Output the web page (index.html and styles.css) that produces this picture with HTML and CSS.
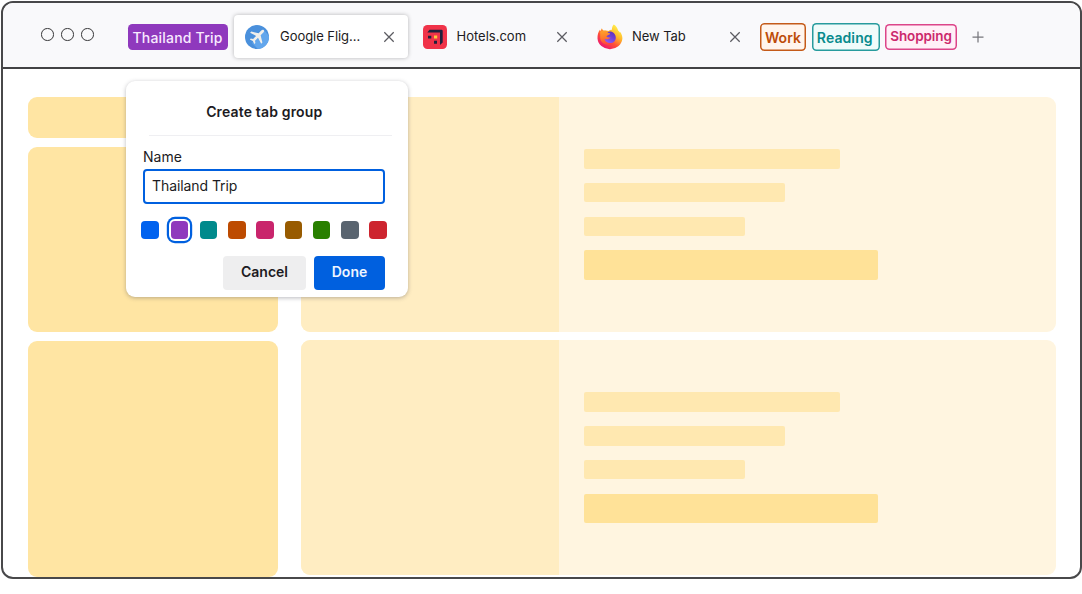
FILE: index.html
```html
<!DOCTYPE html>
<html lang="en">
<head>
<meta charset="utf-8">
<title>Create tab group</title>
<link rel="stylesheet" href="styles.css">
</head>
<body>
<div class="window">
  <header class="tabbar">
    <div class="controls"><i></i><i></i><i></i></div>
    <span class="group group-purple"><span class="t-thai">Thailand Trip</span></span>
    <div class="tab tab-active">
      <svg class="favicon" viewBox="0 0 24 24"><circle cx="12" cy="12" r="12" fill="#4a90dc"/><path d="M19 5l5 6a12 12 0 0 1-11 13l-6-6z" fill="#62a6ec"/><path d="M18.700 5c.8.8.2 2-.6 2.800l-2.500 2.500 1.800 7.300-1.200 1.200-3.200-6-3 3 .4 2.300-1 1-1.600-3-3-1.600 1-1 2.300.4 3-3-6-3.200 1.200-1.200 7.300 1.800 2.400-2.500c.8-.8 2-1.500 2.700-.8z" fill="#f1efeb"/></svg>
      <span class="title t-google">Google Flig...</span>
      <svg class="close" viewBox="0 0 12 12"><path d="M1.300 1.300l9.400 9.400M10.700 1.300L1.300 10.700"/></svg>
    </div>
    <div class="tab tab-hotels">
      <svg class="favicon" viewBox="0 0 24 24"><rect width="24" height="24" rx="4.500" fill="#f03349"/><path d="M6.500 4.700h12q1.200 0 1.200 1.200V17.500L17 20V7.500H4.300z" fill="#20213d"/><path d="M5 10.700h3.300v2.800H5zM11 15.700h3v3h-3z" fill="#20213d"/><path d="M11 10.600h3.200v3H11z" fill="#ffc83d"/></svg>
      <span class="title t-hotels">Hotels.com</span>
      <svg class="close" viewBox="0 0 12 12"><path d="M1.300 1.300l9.400 9.400M10.700 1.300L1.300 10.700"/></svg>
    </div>
    <div class="tab tab-new">
      <svg class="favicon firefox" viewBox="0 0 26 26">
        <defs>
          <linearGradient id="flame" x1=".85" y1=".1" x2=".25" y2=".95"><stop offset="0" stop-color="#fff14b"/><stop offset=".35" stop-color="#ffb52b"/><stop offset=".65" stop-color="#ff5037"/><stop offset="1" stop-color="#ec1670"/></linearGradient>
          <linearGradient id="globe" x1=".8" y1="0" x2=".3" y2="1"><stop offset="0" stop-color="#5f2fb8"/><stop offset=".5" stop-color="#7142d8"/><stop offset="1" stop-color="#8f5bf5"/></linearGradient>
          <linearGradient id="fox" x1=".3" y1="0" x2=".4" y2="1"><stop offset="0" stop-color="#ffa22a"/><stop offset=".5" stop-color="#ff7a2c"/><stop offset="1" stop-color="#ff4242"/></linearGradient>
        </defs>
        <path d="M16.800.6c2 1.200 3.800 3.600 4.300 6 .8.5 1.200 1.300 1.400 2 .3-.3.300-.8.300-1.200 2 2.500 2.700 5 2.600 7.400A12.500 11.600 0 0 1 .5 14.500c-.1-3.800.8-6.500 2.400-8.800l.8 1.500c.2-1.300.6-2.200 1.200-3 .4 1.300 1 2 2 2.600 1.700-.4 3.200-.2 4.600.3 1-.9 2.100-1.300 3.500-1.300-.2-2 .6-4 1.800-5.200z" fill="url(#flame)"/>
        <path d="M3.200 7.500c3-1.300 6-.8 7.800.3l1 4-1 7 3 2.200c-5 .7-10.500-2-10.800-7z" fill="url(#fox)"/>
        <path d="M10.500 8c3.800-1.800 8.300 1 8.300 5.700 0 3-2.300 5.300-5.500 5.300-3.300 0-5.500-1.800-5.500-4.300 1.800 1.200 4.700.7 5.700-1.500-1.800.4-3 .1-4.200-.7.500-1.300 3.500-1.500 3.900-3-1.500-.2-2.400-.7-2.700-1.500z" fill="url(#globe)"/>
      </svg>
      <span class="title t-new">New Tab</span>
      <svg class="close" viewBox="0 0 12 12"><path d="M1.300 1.300l9.400 9.400M10.700 1.300L1.300 10.700"/></svg>
    </div>
    <span class="group group-orange"><span class="t-work">Work</span></span>
    <span class="group group-teal"><span class="t-reading">Reading</span></span>
    <span class="group group-pink"><span class="t-shopping">Shopping</span></span>
    <svg class="plus" viewBox="0 0 12 12"><path d="M6 .5v11M.5 6h11"/></svg>
  </header>
  <main class="page">
    <aside class="side"><div class="block block-s"></div><div class="block block-m"></div><div class="block block-l"></div></aside>
    <section class="cards">
      <article class="card"><div class="thumb"></div><div class="lines"><b class="line w1"></b><b class="line w2"></b><b class="line w3"></b><b class="line line-big"></b></div></article>
      <article class="card"><div class="thumb"></div><div class="lines"><b class="line w1"></b><b class="line w2"></b><b class="line w3"></b><b class="line line-big"></b></div></article>
    </section>
  </main>
  <div class="dialog">
    <h1 class="heading"><span class="t-heading">Create tab group</span></h1>
    <div class="label"><span class="t-name">Name</span></div>
    <div class="input"><span class="t-input">Thailand Trip</span></div>
    <div class="swatches"><i class="sw blue"></i><i class="sw purple selected"></i><i class="sw teal"></i><i class="sw orange"></i><i class="sw pink"></i><i class="sw brown"></i><i class="sw green"></i><i class="sw gray"></i><i class="sw red"></i></div>
    <div class="actions"><button class="btn cancel"><span class="t-cancel">Cancel</span></button><button class="btn done"><span class="t-done">Done</span></button></div>
  </div>
</div>
</body>
</html>
```
FILE: styles.css
```css
* { box-sizing: border-box; }
body { margin: 0; background: #fff; color: #1c1b22; font-family: Inter, "Liberation Sans", sans-serif; font-size: 14px; }
.window { position: relative; width: 1081px; height: 578px; margin: 1px 0 0 1px; border: 2px solid #48484a; border-radius: 12px; overflow: hidden; background: #fff; }
.tabbar { display: flex; align-items: flex-start; height: 66px; background: #f9f9fb; border-bottom: 2px solid #424244; }
.controls { display: flex; gap: 7.500px; margin: 25px 0 0 38px; width: 87px; }
.controls i { width: 12.500px; height: 12.500px; border: 1.300px solid #38383a; border-radius: 50%; }
.group { display: flex; align-items: center; justify-content: center; flex: none; border-radius: 4.500px; font-weight: 600; white-space: nowrap; }
.group-purple { width: 100px; height: 26px; margin-top: 20.500px; padding: 2px 1px 0 0; background: #8f39bd; color: #f8eaff; font-weight: 500; }
.group-orange { width: 46px; height: 28px; margin: 19.500px 0 0 18px; padding-top: 2px; box-shadow: inset 0 0 0 1.500px #c45a19; background: #fff5ed; color: #bd4c08; }
.group-teal { width: 68.500px; height: 28px; margin: 19.500px 0 0 5.500px; padding: 2px 2px 0 0; box-shadow: inset 0 0 0 1.500px #279b9d; background: #f0fbfa; color: #078b8d; }
.group-pink { width: 72px; height: 26.500px; margin: 20.500px 0 0 5px; padding-bottom: 2px; box-shadow: inset 0 0 0 1.500px #dc4589; background: #fff0f7; color: #cc286c; }
.tab { display: flex; align-items: center; flex: none; height: 43px; margin-top: 12px; }
.tab-active { width: 174px; margin-left: 6px; padding-left: 11px; background: #fff; border-radius: 4px; box-shadow: 0 0 4px rgba(0,0,0,.28); }
.tab-hotels { width: 174px; margin-left: 15px; }
.tab-new { width: 145px; }
.favicon { flex: none; width: 24px; height: 24px; margin-right: 11px; }
.tab-hotels .favicon { margin-right: 9.500px; }
.firefox { width: 26px; height: 26px; margin: 1px 9.500px 0 -.5px; }
.title { width: 103px; padding-bottom: 2px; white-space: nowrap; line-height: 18px; }
.tab-hotels .title { width: 99.500px; }
.tab-new .title { width: 97px; }
.close { flex: none; width: 12px; height: 12px; margin-top: 0; }
.close path { stroke: #5b5b61; stroke-width: 1.250; fill: none; }
.plus { width: 12px; height: 12px; margin: 28px 0 0 15px; }
.plus path { stroke: #77777c; stroke-width: 1.250; fill: none; }

.page { display: flex; gap: 22.600px; padding: 28px 0 0 25.400px; }
.side { width: 250px; }
.block { background: #ffe5a3; border-radius: 9px; }
.block-s { height: 41px; margin-bottom: 9px; }
.block-m { height: 185px; margin-bottom: 9px; }
.block-l { height: 236px; }
.cards { display: grid; gap: 8.400px; width: 755px; align-content: start; }
.card { display: flex; height: 235px; border-radius: 9px; overflow: hidden; background: #fff5e0; }
.thumb { width: 258px; background: #ffedc2; }
.lines { padding: 52px 0 0 25px; }
.line { display: block; height: 19.500px; margin-bottom: 14.250px; border-radius: 2px; background: #ffe8b0; }
.w1 { width: 256px; }
.w2 { width: 201px; }
.w3 { width: 161px; }
.line-big { width: 294px; height: 29.500px; background: #ffe298; }

.dialog { position: absolute; left: 123px; top: 78px; width: 282px; height: 216px; padding: 0 17px; border-radius: 9px; background: #fff; box-shadow: 0 1px 4px rgba(58,57,68,.35); }
.heading { display: flex; align-items: center; justify-content: center; height: 55px; margin: 0 0 0 6px; padding: 6px 12.500px 0 0; width: 243px; border-bottom: 1px solid #efeff2; font-size: 14px; font-weight: 600; white-space: nowrap; }
.label { margin-top: 12px; height: 21.400px; line-height: 18px; }
.input { width: 242px; height: 34.600px; padding-left: 7px; border: 2px solid #0060df; border-radius: 4px; line-height: 29px; }
.swatches { display: flex; gap: 10.750px; margin: 17.200px 0 0 -1.600px; }
.sw { flex: none; width: 17.500px; height: 17.500px; border-radius: 4px; }
.selected { margin: 0 1px; box-shadow: 0 0 0 2px #fff, 0 0 0 4.200px #0060df; }
.blue { background: #0062ef; }
.purple { background: #8f39bd; }
.teal { background: #008a8c; }
.orange { background: #bd4b00; }
.pink { background: #c9256c; }
.brown { background: #985b00; }
.green { background: #298000; }
.gray { background: #5a6570; }
.red { background: #cd242e; }
.actions { display: flex; gap: 8px; margin: 17px 0 0 80px; }
.btn { display: flex; align-items: center; justify-content: center; height: 34.500px; padding: 0 0 3px; border: 0; border-radius: 4px; font: 600 14px Inter, sans-serif; }
.cancel { width: 83px; background: #eeeeef; color: #1c1b22; }
.done { width: 71px; background: #0060df; color: #eff5ff; }

.t-thai { font-size: 14px; letter-spacing: .2px; }
.t-google { font-size: 13px; letter-spacing: -.05px; }
.t-hotels { font-size: 13px; letter-spacing: 0; }
.t-new { font-size: 13px; letter-spacing: -.05px; }
.t-work, .t-reading { font-size: 14px; letter-spacing: .1px; }
.t-shopping { font-size: 13.500px; letter-spacing: -.1px; }
.t-heading { font-size: 14px; letter-spacing: .15px; }
.t-input { letter-spacing: -.08px; }
```
